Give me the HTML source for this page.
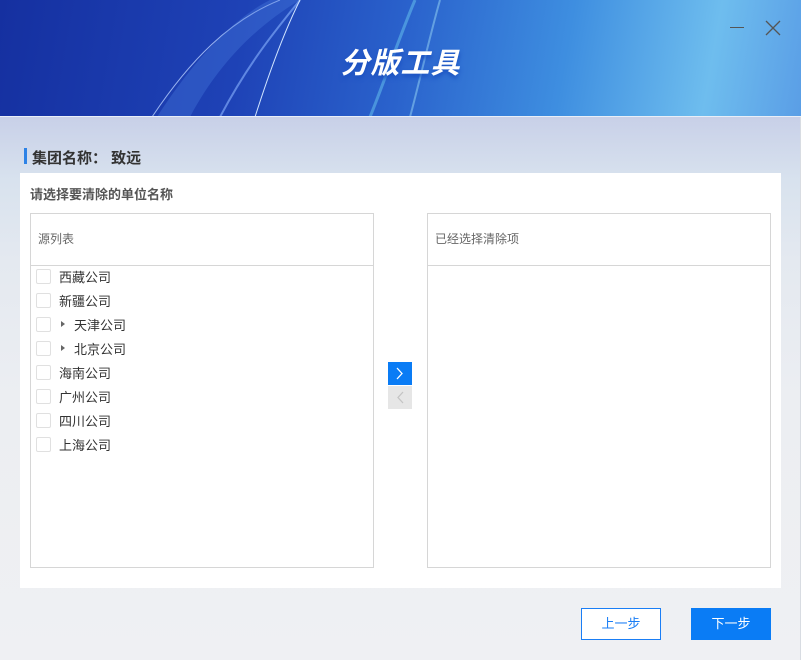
<!DOCTYPE html>
<html><head><meta charset="utf-8"><style>
*{margin:0;padding:0;box-sizing:border-box}
body{width:801px;height:660px;overflow:hidden;position:relative;font-family:"Liberation Sans","Noto Sans CJK SC",sans-serif;background:linear-gradient(180deg,#c8d0e8 117px,#d8e2ee 180px,#e4e9f0 260px,#eceef2 400px,#eff0f3 660px)}
.hdr{position:absolute;left:0;top:0;width:801px;height:117px;background:linear-gradient(100deg,#1530a0 0%,#1e42b6 30%,#2a62cc 50%,#3e8ee0 70%,#6ebdee 88%,#5a9ee6 100%);overflow:hidden;border-bottom:1px solid #e8eef8}
.title{position:absolute;left:0;width:801px;top:40px;text-align:center;color:#fff;font-size:29px;font-weight:bold;font-style:italic;letter-spacing:1px;text-shadow:0 3px 4px #1a50c0}
.panel{position:absolute;left:20px;top:173px;width:761px;height:415px;background:#fff}
.box{position:absolute;top:213px;height:355px;border:1px solid #d6d6d6;background:#fff}
.bh{height:52px;border-bottom:1px solid #d6d6d6;font-size:12px;color:#666;padding:16px 0 0 7px}
.row{height:24px;display:flex;align-items:center;font-size:13px;color:#333}
.cb{width:15px;height:15px;border:1px solid #e0e0e0;border-radius:2px;margin:0 8px 0 5px}
.tri{width:0;height:0;border-left:4px solid #666;border-top:3px solid transparent;border-bottom:3px solid transparent;margin:0 9px 0 2px}
</style></head><body>
<div class="hdr">
<svg width="801" height="117" style="position:absolute;left:0;top:0">
<path d="M152 117 C190 60 230 20 280 0" stroke="#b8d0ff" stroke-width="1" fill="none" opacity=".8"/>
<path d="M157 117 C200 50 240 15 270 0 L300 0 C250 30 215 70 190 117Z" fill="#4a7fe0" opacity=".35"/>
<path d="M220 117 C250 60 280 25 300 0" stroke="#8ab4ff" stroke-width="2" fill="none" opacity=".6"/>
<path d="M255 117 C270 70 285 30 300 0" stroke="#d0e4ff" stroke-width="1" fill="none"/>
<path d="M370 117 C385 80 400 35 415 0" stroke="#6ac8f0" stroke-width="3" fill="none" opacity=".5"/>
<path d="M410 117 C420 80 430 35 440 0" stroke="#9ad8f5" stroke-width="2" fill="none" opacity=".5"/>
</svg>
<div class="title">分版工具</div>
<div style="position:absolute;left:730px;top:27px;width:14px;height:1px;background:#555"></div>
<svg style="position:absolute;left:765px;top:20px" width="16" height="16"><path d="M1 1L15 15M15 1L1 15" stroke="#555" stroke-width="1.3"/></svg>
</div>
<div style="position:absolute;left:24px;top:148px;width:3px;height:16px;background:#2d82e6"></div>
<div style="position:absolute;left:32px;top:147px;font-size:15px;font-weight:bold;color:#333">集团名称：&nbsp;致远</div>
<div class="panel"></div>
<div style="position:absolute;left:30px;top:184px;font-size:13px;font-weight:bold;color:#555">请选择要清除的单位名称</div>
<div class="box" style="left:30px;width:344px">
<div class="bh">源列表</div>
<div style="margin-top:-2px">
<div class="row"><div class="cb"></div>西藏公司</div>
<div class="row"><div class="cb"></div>新疆公司</div>
<div class="row"><div class="cb"></div><div class="tri"></div>天津公司</div>
<div class="row"><div class="cb"></div><div class="tri"></div>北京公司</div>
<div class="row"><div class="cb"></div>海南公司</div>
<div class="row"><div class="cb"></div>广州公司</div>
<div class="row"><div class="cb"></div>四川公司</div>
<div class="row"><div class="cb"></div>上海公司</div>
</div></div>
<div class="box" style="left:427px;width:344px"><div class="bh">已经选择清除项</div></div>
<div style="position:absolute;left:388px;top:362px;width:24px;height:23px;background:#0a7cf5"><svg width="24" height="23"><path d="M9 6L14 11.5L9 17" stroke="#fff" stroke-width="1.3" fill="none"/></svg></div>
<div style="position:absolute;left:388px;top:386px;width:24px;height:23px;background:#e6e6e6"><svg width="24" height="23"><path d="M15 6L10 11.5L15 17" stroke="#c4c4c4" stroke-width="1.3" fill="none"/></svg></div>
<div style="position:absolute;left:581px;top:608px;width:80px;height:32px;border:1px solid #1a7ef5;background:#fff;color:#1a7ef5;font-size:13px;text-align:center;line-height:30px">上一步</div>
<div style="position:absolute;left:691px;top:608px;width:80px;height:32px;background:#0a7cf5;color:#fff;font-size:13px;text-align:center;line-height:32px">下一步</div>
<div style="position:absolute;left:800px;top:117px;width:1px;height:543px;background:#d8dce2"></div>
</body></html>
